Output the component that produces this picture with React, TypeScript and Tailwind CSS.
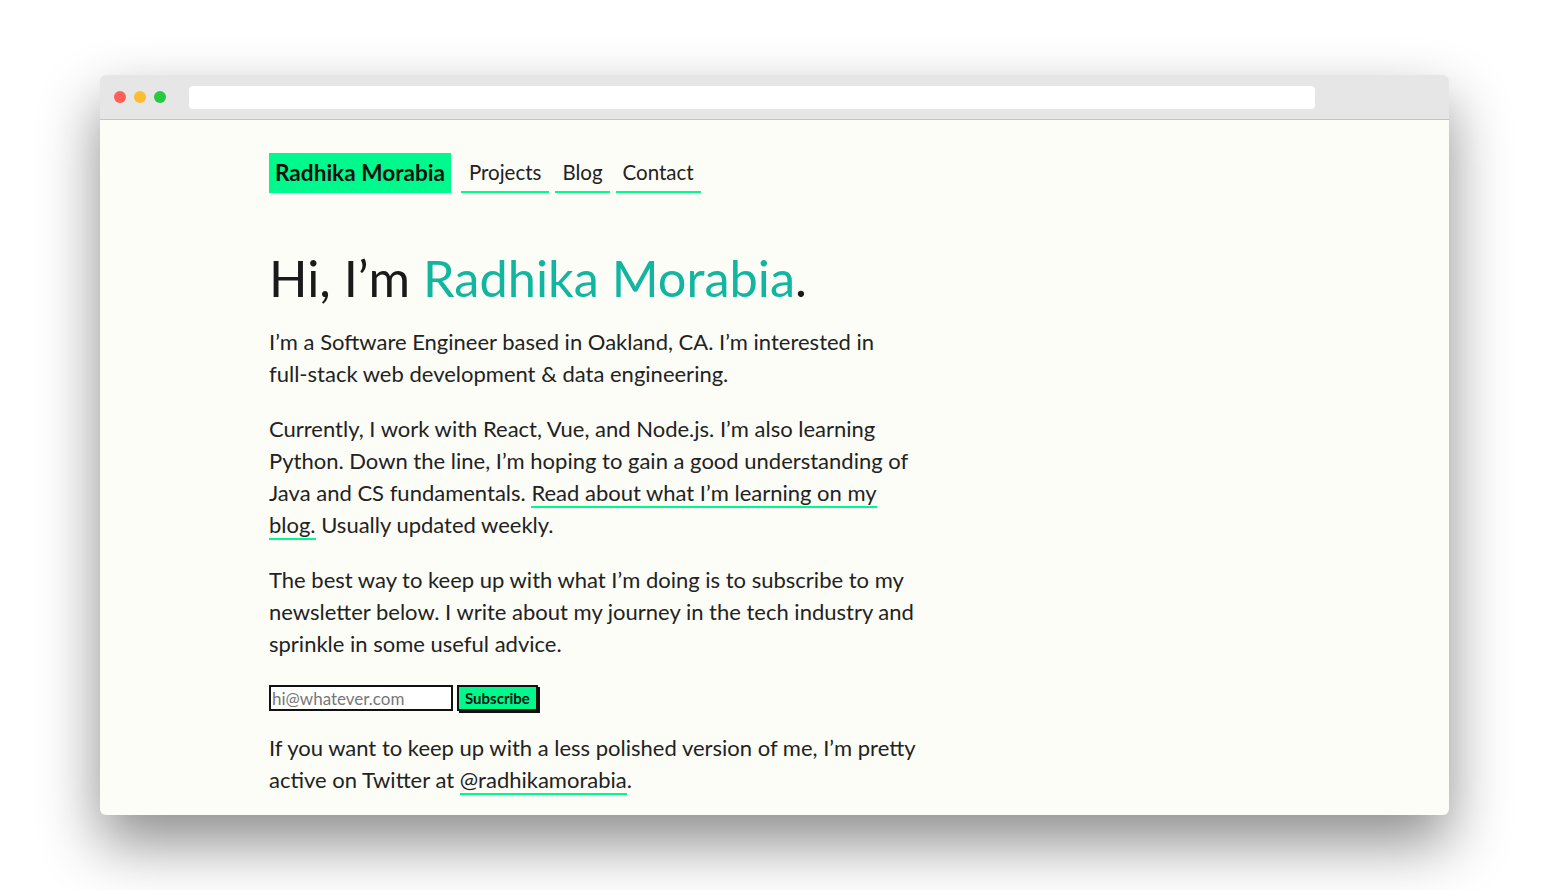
import React from "react";

export default function App() {
  return (
    <div className="min-h-[890px] w-full bg-white pt-[75px] px-[100px] font-['Lato',sans-serif]">
      <div className="h-[740px] w-[1349px] overflow-hidden rounded-[6px] bg-[#fcfdf7] shadow-[0_28px_60px_rgba(0,0,0,0.45)] flex flex-col">
        {/* title bar */}
        <div className="h-[45px] shrink-0 bg-[#e6e6e6] border-b border-[#c4c4c4] flex items-center pl-[14px] pr-[134px]">
          <div className="flex gap-[8px]">
            <span className="block h-[12px] w-[12px] rounded-full bg-[#fe5f57]" />
            <span className="block h-[12px] w-[12px] rounded-full bg-[#febc2e]" />
            <span className="block h-[12px] w-[12px] rounded-full bg-[#28c840]" />
          </div>
          <div className="ml-[23px] h-[23px] flex-1 rounded-[4px] bg-white" />
        </div>
        {/* content */}
        <div className="pl-[169px] pt-[33px] text-[#222222]">
          <nav className="flex items-stretch h-[40px] text-[20.5px]">
            <a className="flex items-center bg-[#00f98c] px-[6px] text-[22.6px] font-bold text-[#111]">Radhika Morabia</a>
            <a className="ml-[10px] flex items-center px-[8px] border-b-2 border-[#00f98c]">Projects</a>
            <a className="ml-[6px] flex items-center px-[7px] border-b-2 border-[#00f98c]">Blog</a>
            <a className="ml-[6px] flex items-center px-[7px] border-b-2 border-[#00f98c]">Contact</a>
          </nav>
          <h1 className="mt-[54px] text-[50.5px] leading-[62px] text-[#1a1a1a]">
            Hi, I’m <span className="text-[#12b5a0]">Radhika Morabia</span>.
          </h1>
          <div className="w-[652px] text-[22px] leading-[32px] mt-[17px]">
            <p>
              I’m a Software Engineer based in Oakland, CA. I’m interested in{" "}
              <span className="whitespace-nowrap">full-stack</span> web development &amp; data engineering.
            </p>
            <p className="mt-[23px]">
              Currently, I work with React, Vue, and Node.js. I’m also learning Python. Down the line, I’m hoping to gain a good understanding of Java and CS fundamentals.{" "}
              <a className="border-b-2 border-[#00f98c]">Read about what I’m learning on my blog.</a> Usually updated weekly.
            </p>
            <p className="mt-[23px]">
              The best way to keep up with what I’m doing is to subscribe to my newsletter below. I write about my journey in the tech industry and sprinkle in some useful advice.
            </p>
            <form className="mt-[25px] flex items-start gap-[4px]">
              <input
                placeholder="hi@whatever.com"
                className="h-[26px] w-[184px] border-2 border-[#111] bg-white px-[1px] text-[17px] leading-none placeholder:text-[#777] outline-none"
              />
              <button
                type="button"
                className="h-[26px] border-2 border-[#111] bg-[#00f98c] px-[6px] text-[15px] font-bold leading-none text-[#111] shadow-[2px_2px_0_#111]"
              >
                Subscribe
              </button>
            </form>
            <p className="mt-[21px]">
              If you want to keep up with a less polished version of me, I’m pretty active on Twitter at{" "}
              <a className="border-b-2 border-[#00f98c]">@radhikamorabia</a>.
            </p>
          </div>
        </div>
      </div>
    </div>
  );
}
